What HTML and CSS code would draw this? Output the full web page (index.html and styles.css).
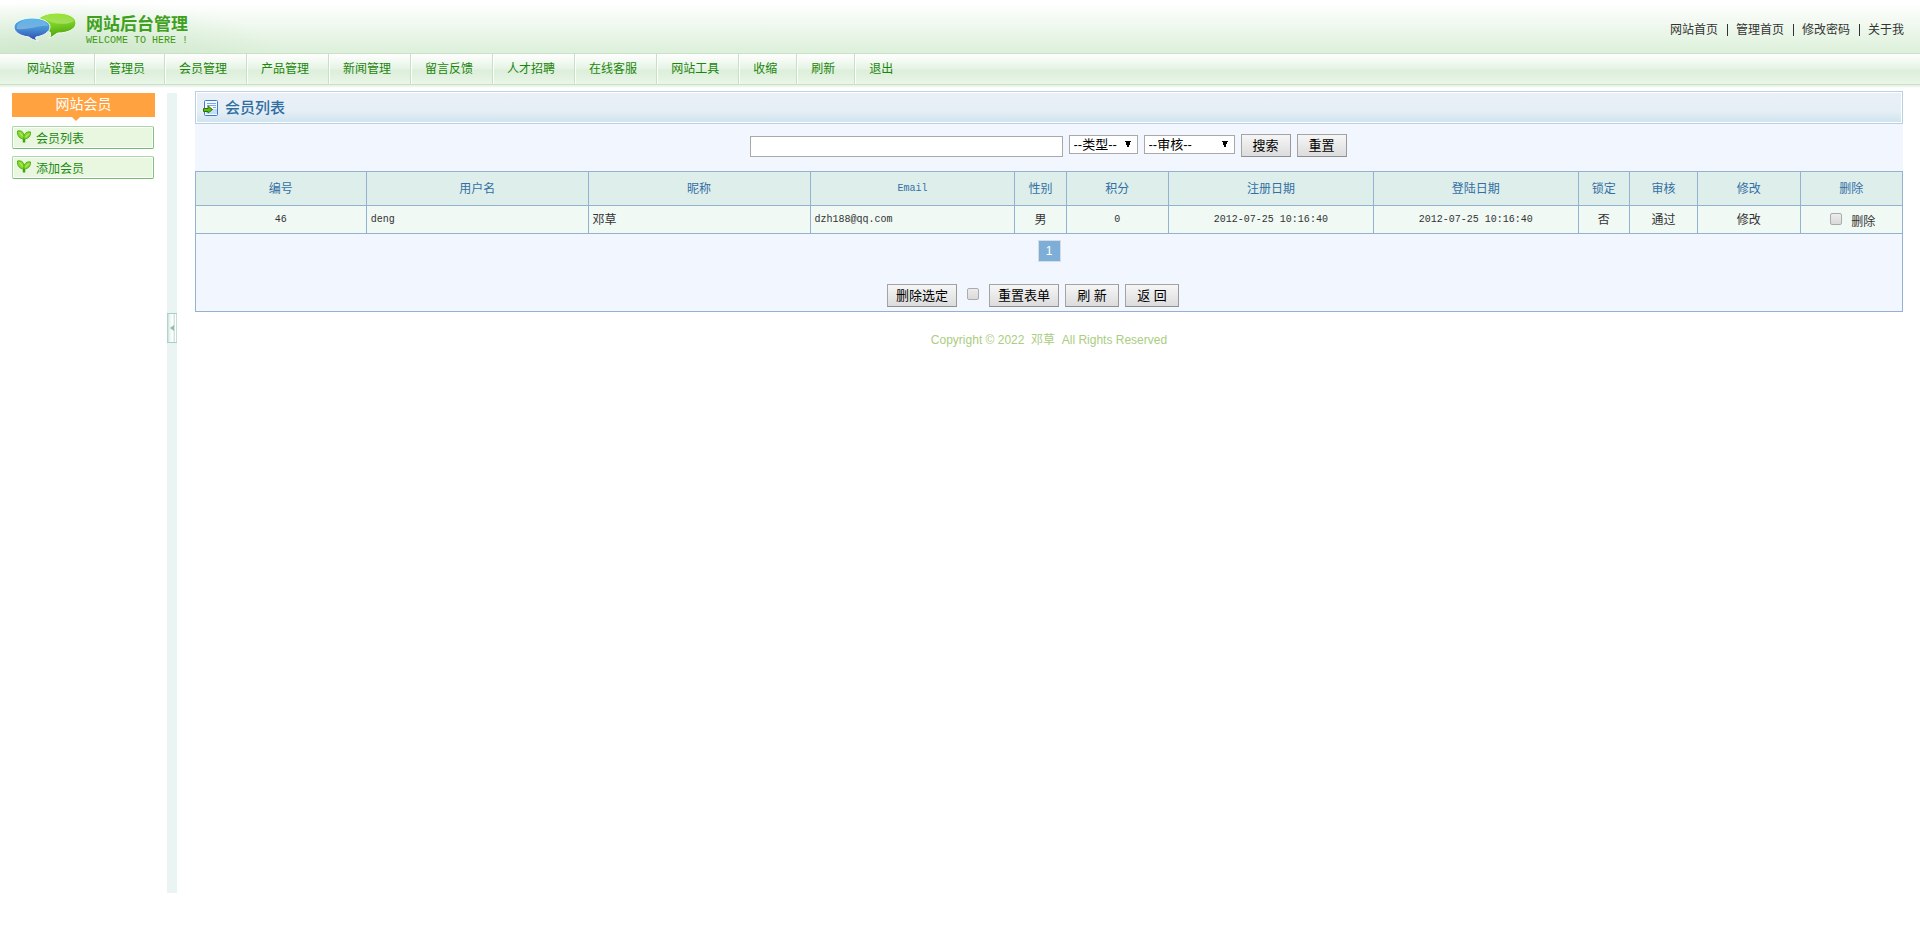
FILE: index.html
```html
<!DOCTYPE html>
<html lang="zh-CN">
<head>
<meta charset="utf-8">
<title>网站后台管理</title>
<link rel="stylesheet" href="styles.css">
</head>
<body>
<header class="header">
  <div class="brand">
    <svg class="logo" width="66" height="32" viewBox="0 0 66 32" aria-hidden="true">
      <defs>
        <linearGradient id="green" x1="0" y1="0" x2="0.2" y2="1"><stop offset="0" stop-color="#9be82c"/><stop offset=".5" stop-color="#7fd322"/><stop offset="1" stop-color="#4da314"/></linearGradient>
        <linearGradient id="blue" x1="0" y1="0" x2="0" y2="1"><stop offset="0" stop-color="#55b8e8"/><stop offset=".5" stop-color="#468cd4"/><stop offset="1" stop-color="#2c48a6"/></linearGradient>
        <linearGradient id="shine" x1="0" y1="0" x2="0" y2="1"><stop offset="0" stop-color="#fff" stop-opacity=".05"/><stop offset="1" stop-color="#fff" stop-opacity=".3"/></linearGradient>
      </defs>
      <path d="M45 1C56 1 64 5 64 11C64 17 56 21 46 21C43 22 41 25 37 26C39 24 39 22 38 20C30 19 25 15 25 11C25 5 34 1 45 1Z" fill="url(#green)" stroke="#f2fbee"/>
      <path d="M45 2C54 2 61 5 62 9C54 14 40 12 30 6C34 3 39 2 45 2Z" fill="url(#shine)"/>
      <path d="M20 6C31 6 38 10 38 15C38 20 31 24 24 25C23 26 24 28 26 29C22 28 19 27 17 25C8 24 2 20 2 15C2 10 10 6 20 6Z" fill="url(#blue)" stroke="#f2fbff"/>
      <path d="M20 7C29 7 36 10 36 14C28 13 18 18 5 17C3 12 11 7 20 7Z" fill="url(#shine)"/>
    </svg>
    <div class="brand-text">
      <strong class="brand-name">网站后台管理</strong>
      <span class="brand-sub">WELCOME TO HERE !</span>
    </div>
  </div>
  <div class="top-links">
    <a href="#">网站首页</a><i class="bar"></i><a href="#">管理首页</a><i class="bar"></i><a href="#">修改密码</a><i class="bar"></i><a href="#">关于我</a>
  </div>
</header>
<nav class="nav">
  <a href="#">网站设置</a><a href="#">管理员</a><a href="#">会员管理</a><a href="#">产品管理</a><a href="#">新闻管理</a><a href="#">留言反馈</a><a href="#">人才招聘</a><a href="#">在线客服</a><a href="#">网站工具</a><a href="#">收缩</a><a href="#">刷新</a><a href="#">退出</a>
</nav>
<div class="layout">
  <aside class="sidebar">
    <h2 class="side-title">网站会员</h2>
    <a class="side-link" href="#"><svg class="leaf" width="14" height="13" viewBox="0 0 14 13" aria-hidden="true"><path d="M7 12.500V8" stroke="#3fa312" stroke-width="2.500"/><path d="M7 9C3 9 0 6 .5 1C5 0 8 3 7 9Z" fill="#86d92a" stroke="#4fae16"/><path d="M7 9C6 5 9 1 13.500 2C14 6 11 9 7 9Z" fill="#86d92a" stroke="#4fae16"/><path d="M2.500 2.500L6 6.500M12 3.500L8.500 7" stroke="#c2f070"/></svg>会员列表</a>
    <a class="side-link" href="#"><svg class="leaf" width="14" height="13" viewBox="0 0 14 13" aria-hidden="true"><path d="M7 12.500V8" stroke="#3fa312" stroke-width="2.500"/><path d="M7 9C3 9 0 6 .5 1C5 0 8 3 7 9Z" fill="#86d92a" stroke="#4fae16"/><path d="M7 9C6 5 9 1 13.500 2C14 6 11 9 7 9Z" fill="#86d92a" stroke="#4fae16"/><path d="M2.500 2.500L6 6.500M12 3.500L8.500 7" stroke="#c2f070"/></svg>添加会员</a>
  </aside>
  <div class="splitter"><button class="handle" type="button" aria-label="收缩"><svg width="4" height="6" viewBox="0 0 4 6"><path d="M0 3L4 0V6Z" fill="#8fbfab"/></svg></button></div>
  <main class="main">
    <div class="panel-title">
      <svg width="16" height="16" viewBox="0 0 16 16" aria-hidden="true"><rect x="1.500" y=".5" width="13" height="15" rx="1" fill="#f4f9ff" stroke="#3f7bc8"/><path d="M3 9H14V14H3Z" fill="#c2def8"/><path d="M4 3.500H13M4 5.500H13M10 7.500H13" stroke="#7fa8e0"/><path d="M.5 8.500H5V6L9.500 9.500L5 13V11.500H.5Z" fill="#62b814" stroke="#2c7404"/></svg>
      <h1>会员列表</h1>
    </div>
    <form class="search">
      <input class="keyword" type="text" aria-label="关键字">
      <select class="sel-type" aria-label="类型"><option>--类型--</option></select>
      <select class="sel-audit" aria-label="审核"><option>--审核--</option></select>
      <button class="btn" type="button">搜索</button>
      <button class="btn" type="reset">重置</button>
    </form>
    <table class="members">
      <colgroup><col class="w10"><col class="w13"><col class="w13"><col class="w12"><col class="w3"><col class="w6"><col class="w12"><col class="w12"><col class="w3"><col class="w4"><col class="w6"><col class="w6"></colgroup>
      <thead><tr><th>编号</th><th>用户名</th><th>昵称</th><th class="latin">Email</th><th>性别</th><th>积分</th><th>注册日期</th><th>登陆日期</th><th>锁定</th><th>审核</th><th>修改</th><th>删除</th></tr></thead>
      <tbody><tr><td class="latin">46</td><td class="latin left">deng</td><td class="left">邓草</td><td class="latin left">dzh188@qq.com</td><td>男</td><td class="latin">0</td><td class="latin">2012-07-25 10:16:40</td><td class="latin">2012-07-25 10:16:40</td><td>否</td><td>通过</td><td><a href="#">修改</a></td><td><label class="del"><input class="check" type="checkbox">删除</label></td></tr></tbody>
    </table>
    <div class="foot">
      <span class="page">1</span>
      <div class="actions">
        <button class="btn" type="button">删除选定</button>
        <input class="check" type="checkbox" aria-label="全选">
        <button class="btn" type="reset">重置表单</button>
        <button class="btn wide" type="button">刷 新</button>
        <button class="btn wide" type="button">返 回</button>
      </div>
    </div>
    <footer class="copyright">Copyright © 2022&nbsp; 邓草&nbsp; All Rights Reserved</footer>
  </main>
</div>
</body>
</html>
```
FILE: styles.css
```css
* { box-sizing: border-box; }
body {
  margin: 0;
  background: #fff;
  color: #333;
  font: 12px/18px "Liberation Sans", "Noto Sans CJK SC", sans-serif;
}
a { color: inherit; text-decoration: none; }

.header {
  display: flex;
  justify-content: space-between;
  height: 54px;
  padding: 0 16px 0 12px;
  border-bottom: 1px solid #c8e2c8;
  background:
    radial-gradient(ellipse 210px 54px at 70px 54px, rgba(190, 222, 184, .55), rgba(190, 222, 184, 0)),
    linear-gradient(#fff 6%, #dcf0da);
}
.brand { display: flex; gap: 8px; padding-top: 12px; }
.brand-text { display: flex; flex-direction: column; padding-top: 2px; }
.brand-name { color: #3fa01c; font-size: 17px; line-height: 22px; }
.brand-sub { color: #3a9a0e; font: 10px/10px "Liberation Mono", monospace; }
.top-links { display: flex; align-items: center; padding-top: 7px; }
.bar { width: 1px; height: 12px; margin: 0 8px 0 9px; background: #333; }

.nav {
  display: flex;
  height: 34px;
  padding-left: 13px;
  background: linear-gradient(#fff, #e5f3e4 15px, #ddeedb 16px, #e8f6e6 30px, #c8e2c8 30px, #c8e2c8 31px, #e4ece4 31px, #fff);
  color: #1c860c;
}
.nav a {
  height: 30px;
  padding: 0 19px 0 14px;
  border-right: 1px solid #c8e0c6;
  box-shadow: 1px 0 #fff;
  line-height: 30px;
}
.nav a:last-child { border: 0; box-shadow: none; }

.layout { display: flex; align-items: flex-start; padding: 3px 17px 0 12px; }
.sidebar { width: 143px; margin-top: 2px; }
.side-title {
  position: relative;
  margin: 0 0 9px;
  padding-bottom: 2px;
  background: #ffa23f;
  color: #fff;
  font-size: 14px;
  font-weight: 400;
  line-height: 22px;
  text-align: center;
}
.side-title::after {
  content: "";
  position: absolute;
  top: 100%;
  left: 60px;
  border: 4px solid transparent;
  border-top-color: #ffa23f;
  border-bottom: 0;
}
.side-link {
  display: flex;
  gap: 5px;
  height: 23px;
  margin: 0 1px 7px 0;
  padding: 2px 4px 0;
  border: 1px solid #a9d8a6;
  border-right-color: #7fc17c;
  border-bottom-color: #74bb72;
  border-radius: 2px;
  box-shadow: inset 0 0 0 1px #fff;
  background: #e9f6e0;
  color: #1c8a12;
  line-height: 20px;
}
.leaf { margin-top: 1px; }
.splitter {
  display: flex;
  flex: none;
  width: 10px;
  height: 800px;
  margin: 2px 18px 0 12px;
  padding-top: 220px;
  background: #eaf5f3;
}
.handle {
  display: flex;
  align-items: center;
  justify-content: center;
  width: 10px;
  height: 30px;
  padding: 0;
  border: 1px solid #a9d0c4;
  border-width: 1px 0;
  background: linear-gradient(90deg, #9fcabc, #e4f1ed 20%, #fff 55%, #cfe5de 75%, #fff 85%, #a9d0c4);
}
.main { flex: 1; min-width: 0; }
.panel-title {
  display: flex;
  align-items: center;
  gap: 6px;
  height: 33px;
  padding: 0 7px;
  border: 1px solid #b6d2e2;
  box-shadow: inset 0 0 0 1px #fff;
  background: linear-gradient(#eaeff8, #e6eff5 60%, #cfe3ef);
  color: #2f6ea2;
}
.panel-title h1 { margin: 0; font-size: 15px; font-weight: 500; line-height: 30px; }
.search {
  display: flex;
  align-items: flex-start;
  justify-content: center;
  gap: 6px;
  height: 47px;
  padding: 10px 2px 0 0;
  background: #f2f7ff;
}
.search input, .search select, .btn {
  border: 1px solid #a9a9a9;
  border-radius: 0;
  color: #000;
  font: 13px/17px "Liberation Sans", "Noto Sans CJK SC", sans-serif;
}
.search .keyword { width: 313px; height: 21px; margin-top: 2px; background: #fff; }
.search select {
  appearance: none;
  height: 19px;
  margin-top: 1px;
  padding: 0 0 0 4px;
  background:
    linear-gradient(to bottom right, #000 50%, transparent 50%) right 6px top 5px / 3px 7px no-repeat,
    linear-gradient(to bottom left, #000 50%, transparent 50%) right 9px top 5px / 3px 7px no-repeat,
    #fff;
}
.search .sel-type { width: 69px; }
.search .sel-audit { width: 91px; }
.btn {
  height: 23px;
  padding: 0 7px;
  border-color: #a4a4a4 #999 #8f8f8f #a4a4a4;
  background: linear-gradient(#f6f6f6, #dcdcdc);
}
.search .btn { width: 50px; }

.members {
  width: 100%;
  table-layout: fixed;
  border-collapse: collapse;
  text-align: center;
}
.members th, .members td { padding: 0 4px; border: 1px solid #93b2d2; }
.members th { height: 34px; background: #deeeea; color: #336fa4; font-weight: 400; }
.members td { height: 28px; background: #f0f9f4; }
.members .left { text-align: left; }
.members .latin { font: 10px/18px "Liberation Mono", monospace; }
.w3 { width: 3%; }
.w4 { width: 4%; }
.w6 { width: 6%; }
.w10 { width: 10%; }
.w12 { width: 12%; }
.w13 { width: 13%; }
.check {
  appearance: none;
  width: 12px;
  height: 12px;
  margin: 0;
  border: 1px solid #ababab;
  border-radius: 2px;
  background: linear-gradient(#ececec, #dadada);
}
.del { display: flex; justify-content: center; gap: 9px; padding: 4px 0 0 3px; }
.foot {
  display: flex;
  flex-direction: column;
  align-items: center;
  gap: 22px;
  padding: 6px 0 4px;
  border: 1px solid #93b2d2;
  border-top: 0;
  background: #f2f7ff;
}
.page {
  width: 23px;
  border: 1px solid #d4dde4;
  background: #7caed8;
  color: #fff;
  line-height: 20px;
  text-align: center;
}
.actions { display: flex; gap: 6px; padding-right: 32px; }
.actions .btn { width: 70px; padding: 0; }
.actions .wide { width: 54px; }
.actions .check { margin: 4px; }
.copyright { padding-top: 19px; color: #aacd80; text-align: center; }
```
